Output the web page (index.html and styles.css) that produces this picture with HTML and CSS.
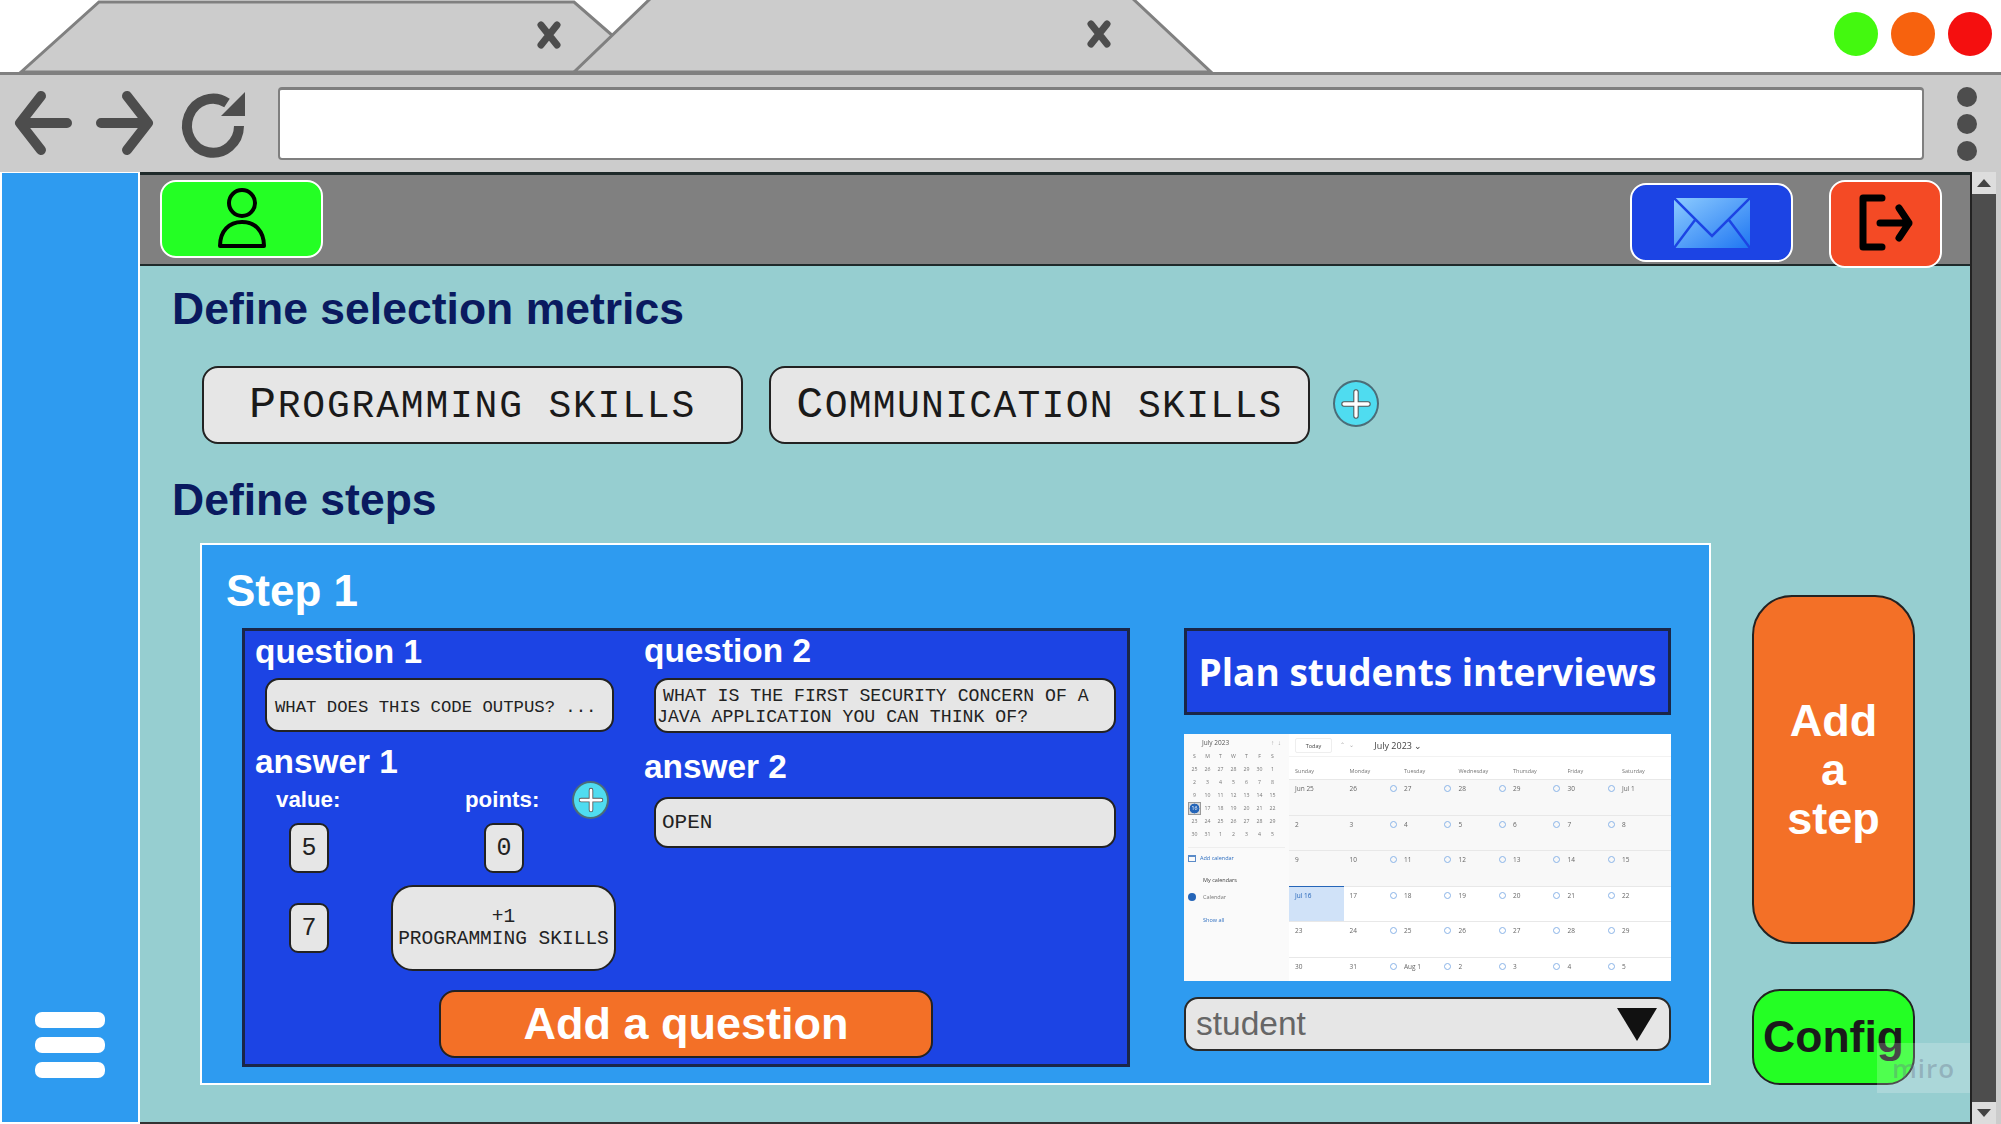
FILE: index.html
```html
<!DOCTYPE html>
<html lang="en">
<head>
    <meta charset="UTF-8">
    <title>Define steps</title>
    <link rel="stylesheet" href="styles.css">
</head>
<body>
<div class="window">

    <!-- browser chrome -->
    <div class="tabstrip">
        <svg class="tabs" width="1215" height="72" viewBox="0 0 1215 72">
            <polygon points="21,72 99,2 574,2 613,36 613,72" fill="#ccc" stroke="#808080" stroke-width="3"/>
            <polygon points="574,72 652,-3 1131,-3 1211,72" fill="#ccc" stroke="#808080" stroke-width="3"/>
            <path d="M541 25 L557 45 M557 25 L541 45" stroke="#4d4d4d" stroke-width="7" stroke-linecap="round"/>
            <path d="M1091 24 L1107 44 M1107 24 L1091 44" stroke="#4d4d4d" stroke-width="7" stroke-linecap="round"/>
        </svg>
        <div class="lights">
            <span class="light green"></span>
            <span class="light orange"></span>
            <span class="light red"></span>
        </div>
    </div>

    <div class="toolbar">
        <svg class="nav" width="262" height="100" viewBox="0 0 262 100">
            <path d="M41 24 L20 51 L41 78 M21 51 H67" fill="none" stroke="#4d4d4d" stroke-width="10" stroke-linecap="round" stroke-linejoin="round"/>
            <path d="M127 24 L148 51 L127 78 M101 51 H147" fill="none" stroke="#4d4d4d" stroke-width="10" stroke-linecap="round" stroke-linejoin="round"/>
            <path d="M239 54 A26 27 0 1 1 227 31" fill="none" stroke="#4d4d4d" stroke-width="10"/>
            <polygon points="245,20 245,44 221,44" fill="#4d4d4d"/>
        </svg>
        <div class="address"></div>
        <div class="dots"><span></span><span></span><span></span></div>
    </div>

    <div class="app">
        <aside class="sidebar">
            <div class="burger"><span></span><span></span><span></span></div>
        </aside>

        <main class="main">
            <header class="topbar">
                <button class="icon-btn user">
                    <svg width="60" height="70" viewBox="0 0 60 70">
                        <ellipse cx="30" cy="19" rx="13" ry="13" fill="none" stroke="#000" stroke-width="4"/>
                        <path d="M8 62 C8 47 17 38 30 38 C43 38 52 47 52 62 Z" fill="none" stroke="#000" stroke-width="4" stroke-linejoin="round"/>
                    </svg>
                </button>
                <button class="icon-btn mail">
                    <svg width="76" height="50" viewBox="0 0 76 50">
                        <defs>
                            <linearGradient id="env" x1="0" y1="0" x2="1" y2="1">
                                <stop offset="0" stop-color="#8ccbff"/>
                                <stop offset="1" stop-color="#1f76f2"/>
                            </linearGradient>
                        </defs>
                        <rect width="76" height="50" rx="2" fill="url(#env)"/>
                        <path d="M0 0 L38 38 L76 0 M0 50 L21 22 M76 50 L55 22" fill="none" stroke="#1c44e4" stroke-width="2.5"/>
                    </svg>
                </button>
                <button class="icon-btn logout">
                    <svg width="60" height="60" viewBox="0 0 60 60">
                        <path d="M26 4 H7 V53 H26" fill="none" stroke="#000" stroke-width="7" stroke-linecap="round" stroke-linejoin="round"/>
                        <path d="M24 29 H53 M43 14 L53 29 L43 44" fill="none" stroke="#000" stroke-width="7" stroke-linecap="round" stroke-linejoin="round"/>
                    </svg>
                </button>
            </header>

            <h2 class="section first">Define selection metrics</h2>
            <div class="metrics">
                <div class="chip"><span>Programming skills</span></div>
                <div class="chip wide"><span>Communication skills</span></div>
                <button class="plus big">
                    <svg viewBox="0 0 24 24"><path d="M12 4 V20 M4 12 H20" stroke="#555" stroke-width="3.6" stroke-linecap="round"/><path d="M12 4 V20 M4 12 H20" stroke="#fff" stroke-width="2.2" stroke-linecap="round"/></svg>
                </button>
            </div>

            <h2 class="section">Define steps</h2>
            <div class="steps-row">
                <section class="step">
                    <h3 class="step-title">Step 1</h3>
                    <div class="step-body">
                        <div class="questions">
                            <div class="q-cols">
                                <div class="q-col one">
                                    <div class="q-label tight">question 1</div>
                                    <div class="field q1">What does this code outpus? ...</div>
                                    <div class="q-label a1">answer 1</div>
                                    <div class="answer-grid">
                                        <div class="small-label value">value:</div>
                                        <div class="points-head">
                                            <span class="small-label">points:</span>
                                            <button class="plus">
                                                <svg viewBox="0 0 24 24"><path d="M12 4 V20 M4 12 H20" stroke="#555" stroke-width="3.6" stroke-linecap="round"/><path d="M12 4 V20 M4 12 H20" stroke="#fff" stroke-width="2.2" stroke-linecap="round"/></svg>
                                            </button>
                                        </div>
                                        <div class="num left">5</div>
                                        <div class="num right">0</div>
                                        <div class="num left">7</div>
                                        <div class="bonus"><span>+1<br>Programming skills</span></div>
                                    </div>
                                </div>
                                <div class="q-col two">
                                    <div class="q-label tight">question 2</div>
                                    <div class="field q2">What is the first security concern of a<br>Java application you can think of?</div>
                                    <div class="q-label a2">answer 2</div>
                                    <div class="field open">Open</div>
                                </div>
                            </div>
                            <button class="add-question">Add a question</button>
                        </div>

                        <div class="plan">
                            <div class="plan-title">Plan students interviews</div>
                            <div class="calendar">
                                <div class="cal-side">
                                    <div class="mini-head"><span>July 2023</span><span class="arrows">↑ &nbsp;↓</span></div>
                                    <div class="mini">
                                        <b>S</b><b>M</b><b>T</b><b>W</b><b>T</b><b>F</b><b>S</b>
                                        <i>25</i><i>26</i><i>27</i><i>28</i><i>29</i><i>30</i><i>1</i>
                                        <i>2</i><i>3</i><i>4</i><i>5</i><i>6</i><i>7</i><i>8</i>
                                        <i>9</i><i>10</i><i>11</i><i>12</i><i>13</i><i>14</i><i>15</i>
                                        <i class="today">16</i><i>17</i><i>18</i><i>19</i><i>20</i><i>21</i><i>22</i>
                                        <i>23</i><i>24</i><i>25</i><i>26</i><i>27</i><i>28</i><i>29</i>
                                        <i>30</i><i>31</i><i>1</i><i>2</i><i>3</i><i>4</i><i>5</i>
                                    </div>
                                    <div class="side-link add"><span class="cal-ico"></span>Add calendar</div>
                                    <div class="side-title">My calendars</div>
                                    <div class="side-check"><span class="tick"></span>Calendar</div>
                                    <div class="side-link show">Show all</div>
                                </div>
                                <div class="cal-main">
                                    <div class="cal-bar"><span class="today-btn">Today</span><span class="cal-arrows">⌃ &nbsp;&nbsp;⌄</span><span class="cal-month">July 2023 ⌄</span></div>
                                    <div class="cal-days">
                                        <span>Sunday</span><span>Monday</span><span>Tuesday</span><span>Wednesday</span><span>Thursday</span><span>Friday</span><span>Saturday</span>
                                    </div>
                                    <div class="cal-grid past">
                                        <div>Jun 25</div><div class="i">26</div><div class="i">27</div><div class="i">28</div><div class="i">29</div><div class="i">30</div><div>Jul 1</div>
                                        <div>2</div><div class="i">3</div><div class="i">4</div><div class="i">5</div><div class="i">6</div><div class="i">7</div><div>8</div>
                                        <div>9</div><div class="i">10</div><div class="i">11</div><div class="i">12</div><div class="i">13</div><div class="i">14</div><div>15</div>
                                    </div>
                                    <div class="cal-grid">
                                        <div class="now">Jul 16</div><div class="i">17</div><div class="i">18</div><div class="i">19</div><div class="i">20</div><div class="i">21</div><div>22</div>
                                        <div>23</div><div class="i">24</div><div class="i">25</div><div class="i">26</div><div class="i">27</div><div class="i">28</div><div>29</div>
                                        <div>30</div><div class="i">31</div><div class="i">Aug 1</div><div class="i">2</div><div class="i">3</div><div class="i">4</div><div>5</div>
                                    </div>
                                </div>
                            </div>
                            <div class="dropdown"><span>student</span><span class="caret"></span></div>
                        </div>
                    </div>
                </section>

                <div class="actions">
                    <button class="add-step">Add<br>a<br>step</button>
                    <button class="config">Config</button>
                </div>
            </div>

            <div class="miro">miro</div>
        </main>

        <div class="scrollbar">
            <div class="scroll-btn"><span class="up"></span></div>
            <div class="scroll-track"></div>
            <div class="scroll-btn"><span class="down"></span></div>
        </div>
    </div>
</div>
</body>
</html>
```

FILE: styles.css
```css
* { box-sizing: border-box; }
html, body { margin: 0; padding: 0; background: #fff; }
body { font-family: "Liberation Sans", Arial, sans-serif; }
button { font-family: inherit; padding: 0; cursor: pointer; }

.window { width: 2001px; height: 1124px; overflow: hidden; display: flex; flex-direction: column; }

/* browser chrome */
.tabstrip { height: 72px; display: flex; justify-content: space-between; }
.tabs { display: block; }
.lights { display: flex; gap: 13px; padding: 12px 9px 0 0; }
.light { width: 44px; height: 44px; border-radius: 50%; }
.light.green { background: #43f90f; }
.light.orange { background: #f7620e; }
.light.red { background: #f50f0f; }

.toolbar { height: 100px; background: #ccc; border-top: 3px solid #808080; display: flex; }
.nav { display: block; flex: none; margin: -3px 16px 0 0; }
.address { width: 1646px; height: 73px; margin-top: 12px; background: #fff; border: 2px solid #7f7f7f; border-top-width: 3px; border-radius: 4px; }
.dots { display: flex; flex-direction: column; gap: 7px; margin: 12px 0 0 33px; }
.dots span { width: 20px; height: 20px; border-radius: 50%; background: #4d4d4d; }

.app { height: 952px; display: flex; }

.sidebar { width: 140px; background: #2e9bf0; border: 2px solid #fff; border-top-width: 1px; display: flex; flex-direction: column; justify-content: flex-end; padding: 0 0 44px 33px; }
.burger { display: flex; flex-direction: column; gap: 9px; }
.burger span { width: 70px; height: 16px; background: #fff; border-radius: 7px; }

.main { width: 1832px; background: #96ced0; border-bottom: 2px solid #333; border-right: 2px solid #222; position: relative; }
.topbar { height: 94px; background: #808080; border-top: 3px solid #1f2a2a; border-bottom: 2px solid #1f2a2a; display: flex; align-items: flex-start; }
.icon-btn { border: 2px solid #fff; border-radius: 16px; display: flex; align-items: center; justify-content: center; }
.icon-btn svg { display: block; }
.user { width: 163px; height: 78px; margin: 5px 0 0 20px; background: #24ff24; }
.mail { width: 163px; height: 79px; margin: 8px 0 0 auto; background: #1c44e4; }
.logout { width: 113px; height: 88px; margin: 5px 28px 0 36px; background: #f44a25; }

.section { margin: 31px 0 0 32px; font-size: 44.5px; line-height: 50px; font-weight: bold; color: #0a1a5f; }
.section.first { margin-top: 18px; }

.metrics { display: flex; align-items: center; gap: 26px; margin: 32px 0 0 62px; }
.chip { width: 541px; height: 78px; background: #e6e6e6; border: 2px solid #222; border-radius: 16px; display: flex; align-items: center; justify-content: center; font-family: "Liberation Mono", monospace; color: #1a1a1a; }
.chip span { display: block; font-size: 38px; letter-spacing: 1.8px; text-transform: uppercase; }
.chip.wide span { letter-spacing: 1.3px; }
.chip span::first-letter { font-size: 45px; }
.plus { width: 37px; height: 38px; background: #4fdcf0; border: 2px solid #4b6d78; border-radius: 50%; display: flex; align-items: center; justify-content: center; flex: none; }
.plus svg { display: block; width: 30px; height: 30px; }
.plus.big { width: 46px; height: 47px; margin: -3px 0 0 -3px; }
.plus.big svg { width: 36px; height: 36px; }

.steps-row { display: flex; margin: 18px 0 0 60px; }
.step { width: 1511px; height: 542px; background: #2e9bf0; border: 2px solid #fff; padding: 0 0 0 40px; }
.step-title { margin: 21px 0 0 -16px; font-size: 44px; line-height: 50px; font-weight: bold; color: #fff; }
.step-body { display: flex; gap: 54px; margin-top: 12px; }

.questions { width: 888px; height: 439px; background: #1c44e4; border: 3px solid #1a2648; }
.q-cols { display: flex; }
.q-col.one { width: 399px; }
.q-col.two { width: 482px; }
.q-label { height: 40px; line-height: 40px; font-size: 33.4px; font-weight: bold; color: #fff; margin-left: 10px; }
.q-col.two .q-label { margin-left: 0; }
.q-label.tight { margin-top: 1px; }
.q-col.two .q-label.tight { margin-top: 0; }
.q-label.a1 { margin-top: 10px; }
.q-label.a2 { margin-top: 14px; }

.field { background: #e6e6e6; border: 2px solid #222; border-radius: 14px; font-family: "Liberation Mono", monospace; line-height: 21px; color: #222; text-transform: uppercase; display: flex; align-items: center; }
.q1 { width: 349px; height: 54px; margin: 6px 0 0 20px; padding: 4px 0 0 8px; font-size: 17.3px; }
.q2 { width: 462px; height: 55px; margin: 7px 0 0 10px; padding: 6px 0 0 1px; display: block; font-size: 18.2px; text-indent: 6px; }
.open { width: 462px; height: 51px; margin: 10px 0 0 10px; padding-left: 6px; font-size: 21px; }

.answer-grid { display: grid; grid-template-columns: 146px 225px; grid-template-rows: 37px 50px 93px; row-gap: 5px; margin-top: -1px; }
.answer-grid > :nth-child(n+5) { margin-top: 7px; }
.small-label { font-size: 22.3px; line-height: 37px; font-weight: bold; color: #fff; }
.small-label.value { padding-left: 31px; }
.points-head { display: flex; align-items: center; padding-left: 74px; gap: 33px; }
.num { width: 40px; height: 50px; background: #e6e6e6; border: 2px solid #222; border-radius: 9px; font-family: "Liberation Mono", monospace; font-size: 25px; color: #222; display: flex; align-items: center; justify-content: center; }
.num.left { margin-left: 44px; align-self: center; }
.num.right { margin-left: 93px; }
.bonus { background: #e6e6e6; border: 2px solid #222; border-radius: 22px; font-family: "Liberation Mono", monospace; font-size: 19.5px; line-height: 22px; color: #222; text-transform: uppercase; text-align: center; display: flex; align-items: center; justify-content: center; white-space: nowrap; }

.add-question { display: block; width: 494px; height: 68px; margin: 19px 0 0 194px; background: #f37027; border: 2px solid #222; border-radius: 16px; color: #fff; font-size: 45px; font-weight: bold; }

.plan { width: 487px; }
.plan-title { height: 87px; background: #1c44e4; border: 3px solid #1a2648; font-family: "Open Sans", sans-serif; font-size: 37px; font-weight: bold; color: #fff; display: flex; align-items: center; justify-content: center; }

/* screenshot of a calendar, so everything in here is tiny */
.calendar { height: 247px; margin-top: 19px; background: #fff; display: flex; overflow: hidden; font-family: "Open Sans", sans-serif; font-size: 5.5px; color: #777; filter: blur(0.35px); }
.cal-side { width: 105px; background: #fafafa; padding: 5px 4px 0 4px; }
.mini-head { display: flex; justify-content: space-between; padding: 0 4px 0 14px; height: 8px; line-height: 8px; font-size: 6.5px; color: #555; }
.arrows { color: #aaa; }
.mini { display: grid; grid-template-columns: repeat(7, 13px); grid-auto-rows: 13px; margin-top: 3px; line-height: 13px; text-align: center; font-size: 5.2px; border-bottom: 1px solid #eee; padding-bottom: 6px; }
.mini b, .mini i { font-style: normal; font-weight: normal; }
.mini .today { background: radial-gradient(circle, #2565b8 62%, #d8d8d8 66%); color: #fff; border: 1px solid #999; line-height: 11px; }
.side-link { color: #2f6fc0; }
.side-link.add { display: flex; align-items: center; gap: 4px; margin: 6px 0 0 0; }
.cal-ico { width: 8px; height: 7px; border: 1px solid #5b8bc8; border-top-width: 2px; }
.side-title { margin: 14px 0 0 15px; color: #444; }
.side-check { display: flex; align-items: center; gap: 7px; margin: 9px 0 0 0; }
.tick { width: 8px; height: 8px; border-radius: 50%; background: #2565b8; }
.side-link.show { margin: 15px 0 0 15px; }

.cal-main { width: 382px; }
.cal-bar { height: 23px; border-bottom: 1px solid #f2f2f2; display: flex; align-items: center; padding-left: 6px; }
.today-btn { width: 37px; height: 15px; line-height: 14px; text-align: center; border: 1px solid #eee; border-radius: 2px; color: #444; }
.cal-arrows { margin-left: 8px; color: #aaa; }
.cal-month { margin-left: 20px; font-size: 9px; color: #444; }
.cal-days { height: 22px; display: grid; grid-template-columns: repeat(7, 54.5px); align-items: center; padding-top: 6px; }
.cal-days span { padding-left: 6px; }
.cal-grid { display: grid; grid-template-columns: repeat(7, 54.5px); grid-auto-rows: 35.5px; }
.cal-grid div { border-top: 1px solid #e8e8e8; padding: 4px 1.5px 0 6px; display: flex; justify-content: space-between; align-items: flex-start; font-size: 6.5px; color: #666; }
.cal-grid div.i::after { content: ""; width: 5px; height: 5px; border: 1px solid #8ab4e8; border-radius: 50%; margin-top: 1px; }
.cal-grid.past { background: #f8f8f8; }
.cal-grid .now { background: #d0e2f8; border-top: 1px solid #2565b8; color: #2565b8; }

.dropdown { height: 54px; margin-top: 16px; background: #e6e6e6; border: 2px solid #2a2a2a; border-radius: 14px; display: flex; align-items: center; justify-content: space-between; padding: 0 12px 0 10px; color: #666; font-size: 33.5px; }
.caret { width: 0; height: 0; border-left: 20px solid transparent; border-right: 20px solid transparent; border-top: 33px solid #111; }

.actions { display: flex; flex-direction: column; gap: 45px; margin: 52px 0 0 41px; }
.add-step { width: 163px; height: 349px; background: #f37027; border: 2px solid #222; border-radius: 40px; color: #fff; font-size: 45px; line-height: 49px; font-weight: bold; }
.config { width: 163px; height: 96px; background: #24ff24; border: 2px solid #222; border-radius: 28px; color: #1a1a1a; font-size: 44.5px; font-weight: bold; white-space: nowrap; }

.miro { position: absolute; left: 1737px; top: 871px; width: 93px; height: 50px; background: rgba(255, 255, 255, 0.2); color: rgba(100, 110, 135, 0.35); font-family: "Open Sans", sans-serif; font-size: 26px; line-height: 50px; text-align: center; font-weight: 600; letter-spacing: 1px; }

.scrollbar { width: 29px; display: flex; flex-direction: column; background: #ccc; }
.scroll-btn { height: 22px; width: 24px; background: #ddd; display: flex; align-items: center; justify-content: center; flex: none; }
.scroll-track { flex: 1; width: 24px; background: #4d4d4d; }
.up { border-left: 7px solid transparent; border-right: 7px solid transparent; border-bottom: 8px solid #444; }
.down { border-left: 7px solid transparent; border-right: 7px solid transparent; border-top: 8px solid #444; }
```
